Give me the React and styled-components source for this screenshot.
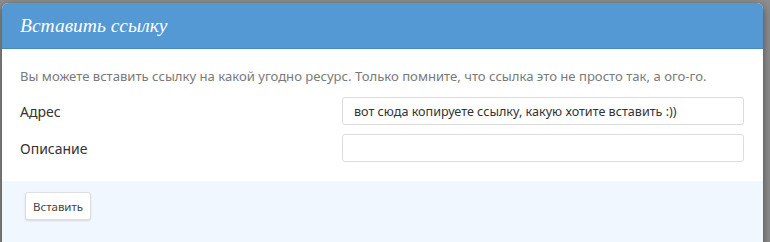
import React from 'react'
import styled, { createGlobalStyle } from 'styled-components'

const GlobalStyle = createGlobalStyle`
  html, body {
    margin: 0;
    padding: 0;
  }
  body {
    font-family: "Noto Sans", "Liberation Sans", sans-serif;
  }
`

const Backdrop = styled.div`
  width: 770px;
  height: 242px;
  overflow: hidden;
  background: #8d8d8d;
  padding: 3px 7px 0 2px;
  box-sizing: border-box;
`

const Modal = styled.div`
  width: 761px;
  background: #fff;
  border-radius: 6px 6px 0 0;
  overflow: hidden;
  box-shadow: 0 3px 9px rgba(0, 0, 0, 0.5);
`

const Header = styled.div`
  height: 45px;
  background: #5498d4;
  border-bottom: 1px solid #4a88c0;
  display: flex;
  align-items: center;
  padding: 0 18px;
`

const Title = styled.h3`
  margin: 0;
  font-family: "Liberation Serif", "DejaVu Serif", serif;
  font-style: italic;
  font-weight: normal;
  font-size: 19.5px;
  color: #fff;
`

const Body = styled.div`
  padding: 18px 18px 19px 18px;
  display: flex;
  flex-direction: column;
  gap: 9px;
`

const Hint = styled.p`
  margin: 0 0 3px 0;
  font-size: 13.1px;
  color: #7a7a7a;
  line-height: 18px;
`

const Row = styled.div`
  display: grid;
  grid-template-columns: 322px 402px;
  align-items: center;
`

const Label = styled.label`
  font-size: 14px;
  color: #333;
`

const Input = styled.input`
  height: 28px;
  box-sizing: border-box;
  border: 1px solid #dcdcdc;
  border-radius: 3px;
  padding: 0 11px;
  font-family: inherit;
  font-size: 12.6px;
  color: #333;
  outline: none;
`

const Footer = styled.div`
  background: #f0f7fe;
  padding: 11px 23px 40px;
`

const Button = styled.button`
  height: 28px;
  padding: 0 7px;
  background: #fff;
  border: 1px solid #dedede;
  border-radius: 3px;
  box-shadow: 0 1px 2px rgba(0, 0, 0, 0.12);
  font-family: inherit;
  font-size: 11.5px;
  color: #444;
`

const fields = [
  { label: 'Адрес', value: 'вот сюда копируете ссылку, какую хотите вставить :))' },
  { label: 'Описание', value: '' },
]

export default function App() {
  return (
    <>
      <GlobalStyle />
      <Backdrop>
        <Modal>
          <Header>
            <Title>Вставить ссылку</Title>
          </Header>
          <Body>
            <Hint>
              Вы можете вставить ссылку на какой угодно ресурс. Только помните, что ссылка это не просто так, а ого-го.
            </Hint>
            {fields.map((f) => (
              <Row key={f.label}>
                <Label>{f.label}</Label>
                <Input defaultValue={f.value} />
              </Row>
            ))}
          </Body>
          <Footer>
            <Button>Вставить</Button>
          </Footer>
        </Modal>
      </Backdrop>
    </>
  )
}
